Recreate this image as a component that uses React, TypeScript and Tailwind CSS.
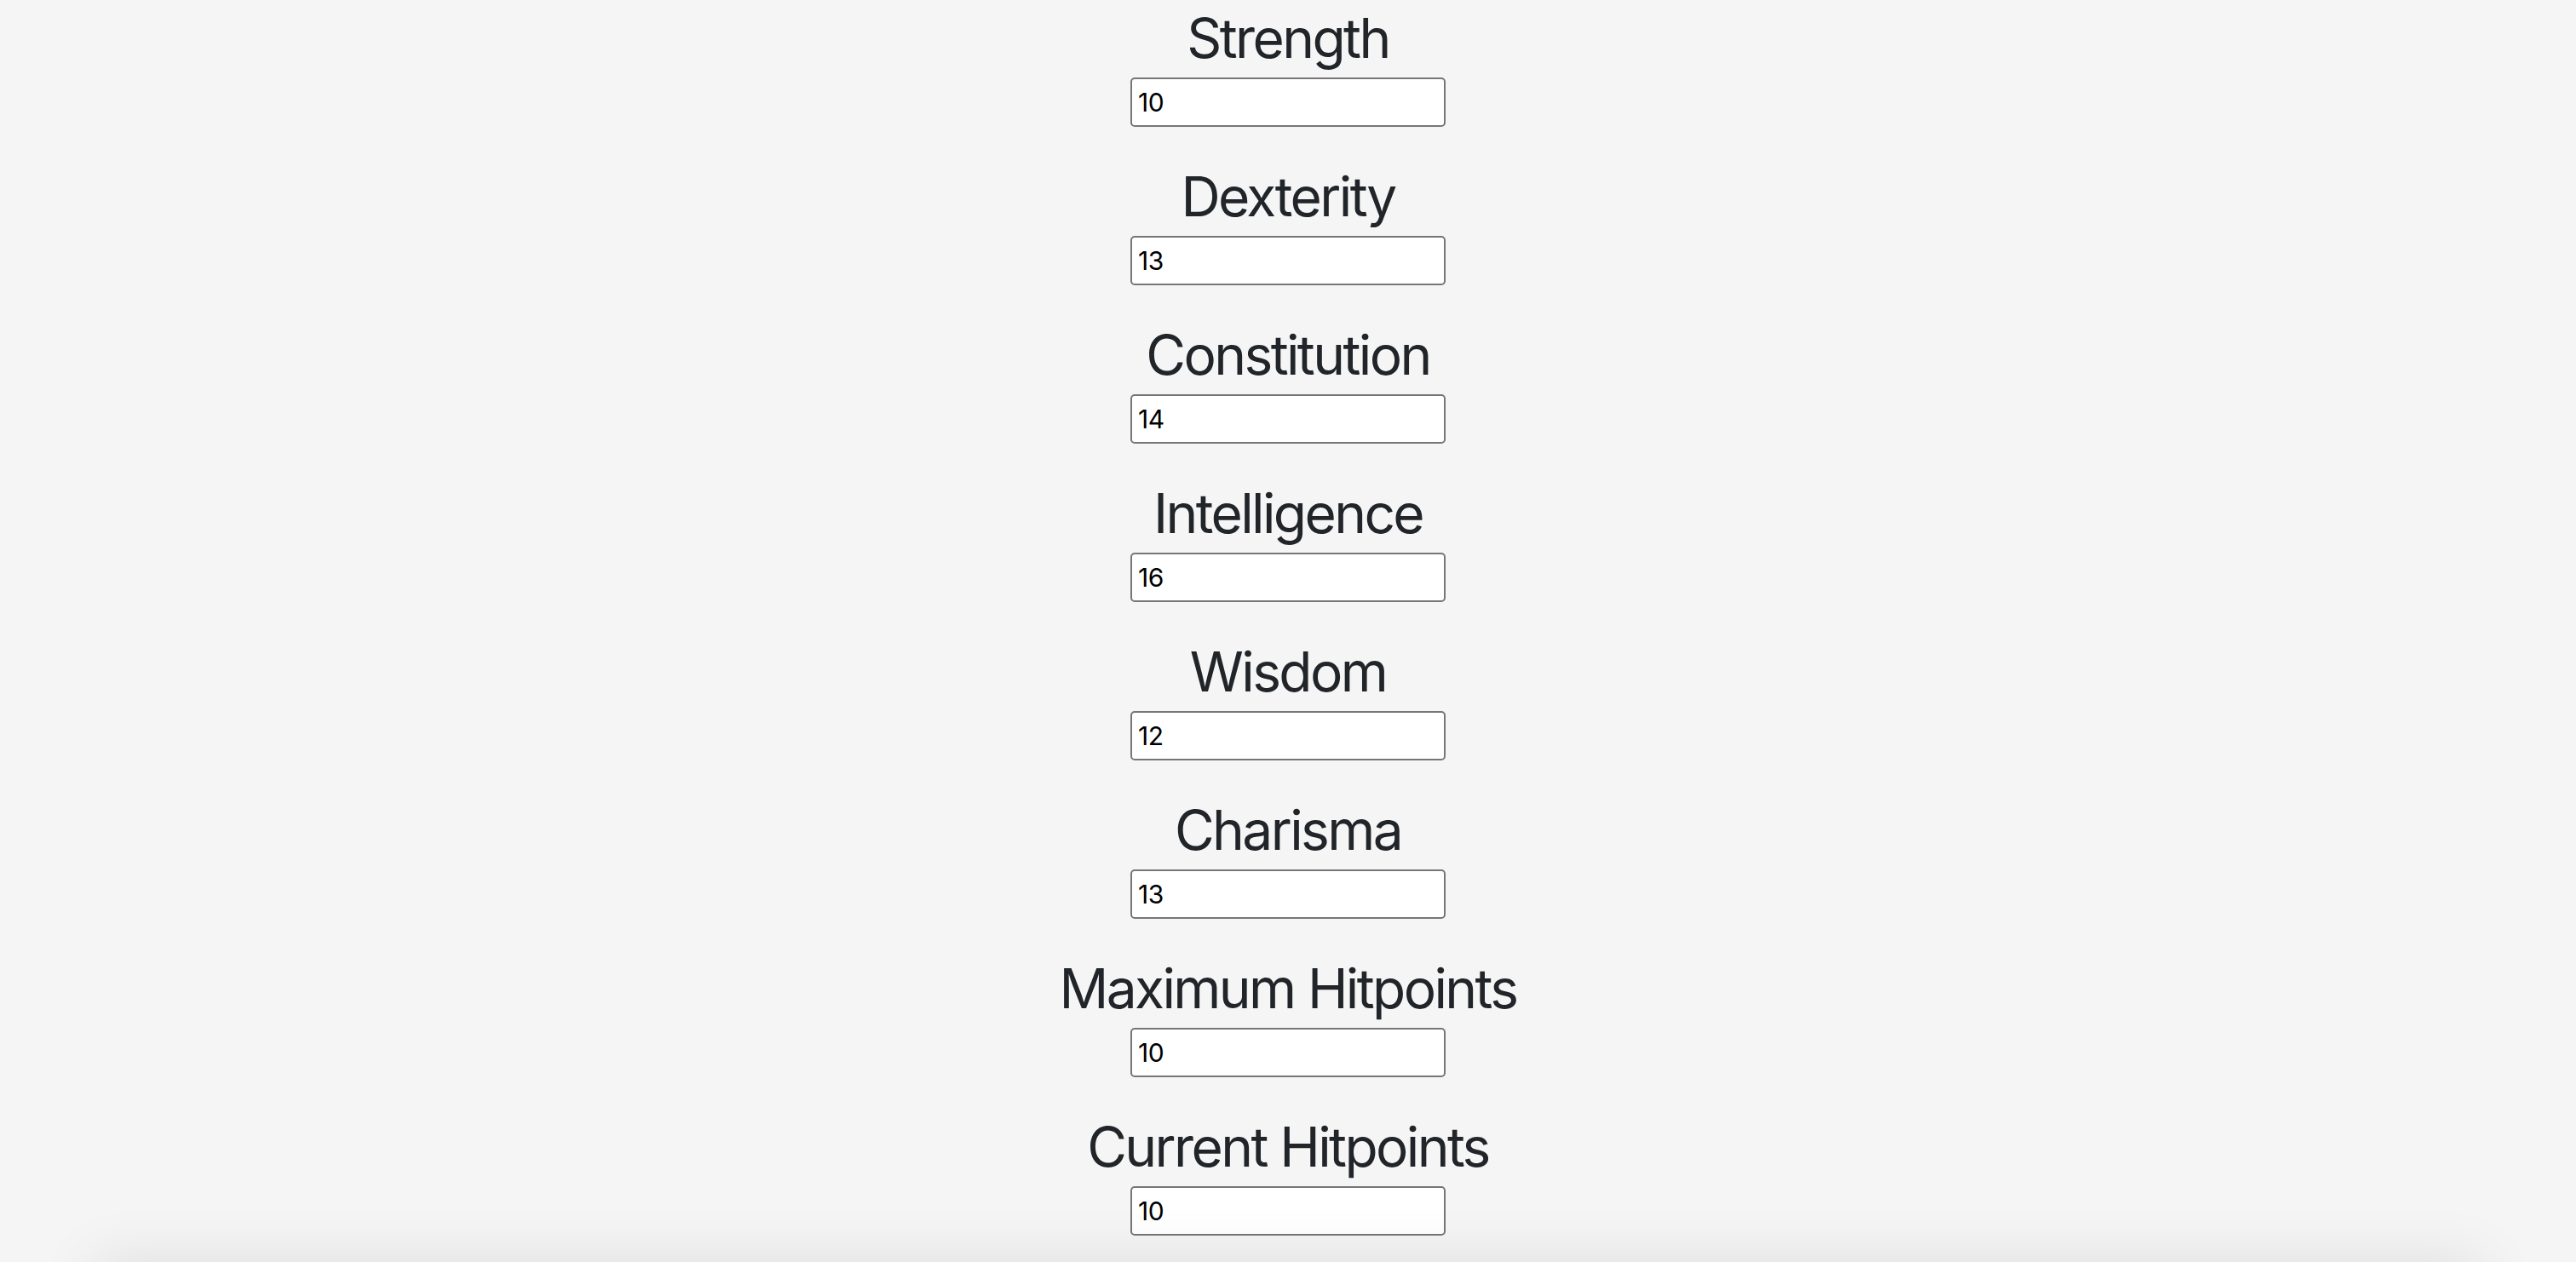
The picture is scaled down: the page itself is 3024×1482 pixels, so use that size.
import { useState } from "react";

const stats = [
	{ key: "str", label: "Strength", value: "10" },
	{ key: "dex", label: "Dexterity", value: "13" },
	{ key: "con", label: "Constitution", value: "14" },
	{ key: "int", label: "Intelligence", value: "16" },
	{ key: "wis", label: "Wisdom", value: "12" },
	{ key: "cha", label: "Charisma", value: "13" },
	{ key: "maxHp", label: "Maximum Hitpoints", value: "10" },
	{ key: "curHp", label: "Current Hitpoints", value: "10" },
];

function StatField({ label, value }: { label: string; value: string }) {
	const [current, setCurrent] = useState(value);

	return (
		<div className="flex flex-col items-center mb-[43px]">
			<h2 className="text-[64px] leading-[77px] font-normal tracking-[-2.6px] text-[#212529] mb-[8px]">
				{label}
			</h2>
			<input
				type="text"
				value={current}
				onChange={(e) => setCurrent(e.target.value)}
				className="w-[370px] h-[58px] px-[7px] bg-white border-2 border-[#767676] rounded-[5px] text-[30px] tracking-[-0.5px] text-black outline-none"
			/>
		</div>
	);
}

export default function App() {
	return (
		<div
			className="min-h-[1482px] bg-[#f5f5f5] pt-[6px]"
			style={{ fontFamily: "Inter, 'Noto Sans', sans-serif" }}
		>
			{stats.map((stat) => (
				<StatField key={stat.key} label={stat.label} value={stat.value} />
			))}
			{/* shadow from the panel sitting just below the fold */}
			<div className="pointer-events-none fixed left-[110px] right-[110px] bottom-0 h-[200px] translate-y-full shadow-[0_0_70px_rgba(0,0,0,0.1)]" />
		</div>
	);
}
